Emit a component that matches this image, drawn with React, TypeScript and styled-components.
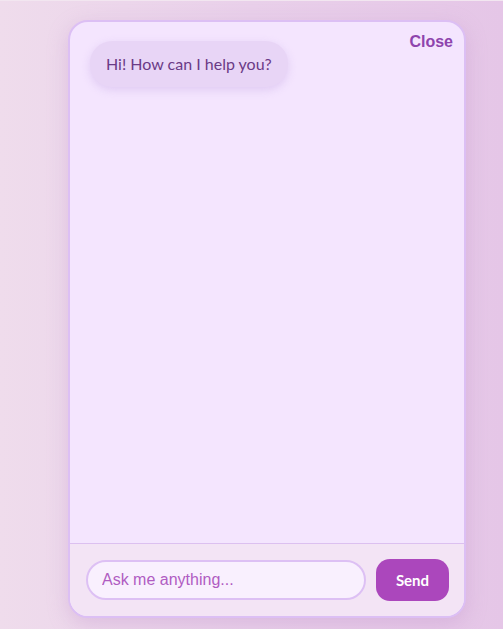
import React from "react";
import styled, { createGlobalStyle } from "styled-components";

const Global = createGlobalStyle`
  html, body { margin: 0; padding: 0; }
  body {
    min-height: 629px;
    background: linear-gradient(90deg, #efdcec 0%, #e9d0ea 50%, #e5c6e7 100%);
    font-family: "Liberation Sans", Arial, sans-serif;
  }
`;

const Page = styled.div`
  padding: 19px 0 0 68px;
  height: 629px;
  box-sizing: border-box;
  border-top: 1px solid #f2e6f0;
`;

const Card = styled.div`
  width: 398px;
  height: 598px;
  box-sizing: border-box;
  border: 2px solid #dcbff4;
  border-radius: 20px;
  background: #f4e5fe;
  display: flex;
  flex-direction: column;
  overflow: hidden;
  position: relative;
  box-shadow: 0 6px 20px rgba(190, 140, 200, 0.35);
`;

const CloseButton = styled.button`
  position: absolute;
  top: 11px;
  right: 11px;
  background: none;
  border: none;
  padding: 0;
  font-family: "Liberation Sans", Arial, sans-serif;
  font-weight: bold;
  font-size: 16px;
  color: #8e44ad;
  cursor: pointer;
`;

const Messages = styled.div`
  flex: 1;
  padding: 19px 20px;
  display: flex;
  flex-direction: column;
  align-items: flex-start;
`;

const Bubble = styled.div`
  background: #e8d5f6;
  color: #6b3a86;
  font-family: Lato, "Open Sans", sans-serif;
  font-size: 16px;
  line-height: 22px;
  padding: 12px 16px;
  border-radius: 22px;
  box-shadow: 0 3px 8px rgba(200, 170, 230, 0.45);
`;

const Footer = styled.div`
  border-top: 1px solid #dcc0f0;
  background: #f3e4f5;
  padding: 15px 15px 15px 16px;
  display: flex;
  align-items: center;
  gap: 10px;
`;

const Input = styled.input`
  flex: 1;
  height: 40px;
  box-sizing: border-box;
  border: 2px solid #ddc0f4;
  border-radius: 20px;
  background: #f9f0fe;
  padding: 0 14px;
  font-family: "Liberation Sans", Arial, sans-serif;
  font-size: 16px;
  color: #6b3a86;
  outline: none;
  &::placeholder { color: #b05cc2; }
`;

const SendButton = styled.button`
  width: 73px;
  height: 42px;
  border: none;
  border-radius: 14px;
  background: #ab47bc;
  color: #fff;
  font-family: Lato, "Liberation Sans", sans-serif;
  font-weight: bold;
  font-size: 15px;
  cursor: pointer;
`;

export default function App() {
  return (
    <>
      <Global />
      <Page>
        <Card>
          <CloseButton>Close</CloseButton>
          <Messages>
            <Bubble>Hi! How can I help you?</Bubble>
          </Messages>
          <Footer>
            <Input placeholder="Ask me anything..." />
            <SendButton>Send</SendButton>
          </Footer>
        </Card>
      </Page>
    </>
  );
}
